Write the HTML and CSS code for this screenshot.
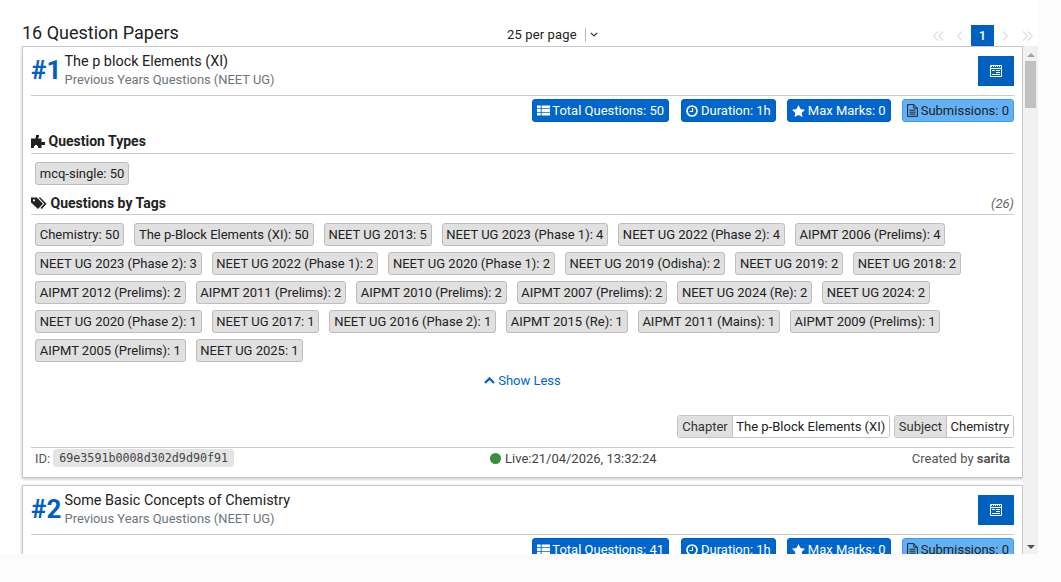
FILE: index.html
```html
<!DOCTYPE html>
<html lang="en">
<head>
<meta charset="utf-8">
<title>Question Papers</title>
<link rel="stylesheet" href="styles.css">
</head>
<body>
<div class="viewport">
  <header class="top">
    <h1 class="count">16 Question Papers</h1>
    <div class="perpage"><span class="perpage-label">25 per page</span><span class="perpage-caret"><svg viewBox="0 0 8 5" width="8" height="5"><path d="M.8.8 4 4 7.2.8" fill="none" stroke="#333" stroke-width="1.2"/></svg></span></div>
    <nav class="pager">
      <span class="pg"><svg viewBox="0 0 11 10" width="11" height="10"><path d="M5 .5.8 5 5 9.500M10 .5 5.800 5 10 9.500" fill="none" stroke="#e2e2e2" stroke-width="1.500"/></svg></span>
      <span class="pg"><svg viewBox="0 0 6 10" width="6" height="10"><path d="M5 .5.800 5 5 9.500" fill="none" stroke="#e2e2e2" stroke-width="1.500"/></svg></span>
      <span class="pg pg-on">1</span>
      <span class="pg"><svg viewBox="0 0 6 10" width="6" height="10"><path d="M1 .5 5.200 5 1 9.500" fill="none" stroke="#e2e2e2" stroke-width="1.500"/></svg></span>
      <span class="pg"><svg viewBox="0 0 11 10" width="11" height="10"><path d="M1 .5 5.200 5 1 9.500M6 .5 10.200 5 6 9.500" fill="none" stroke="#e2e2e2" stroke-width="1.500"/></svg></span>
    </nav>
  </header>
  <div class="pane">
    <main class="content">
      <article class="card">
        <div class="card-head">
          <div class="num">#1</div>
          <div class="titles">
            <div class="title">The p block Elements (XI)</div>
            <div class="sub">Previous Years Questions (NEET UG)</div>
          </div>
          <button class="open"><svg class="ic-open" viewBox="0 0 12 12" width="12" height="12"><path d="M.5.5h11v11H.5z" fill="none" stroke="#fff"/><path d="M1 1h1v1H1zM3 1h1v1H3zM5 1h1v1H5zM7 1h1v1H7zM9 1h1v1H9zM1 3h10v1H1zM2 5h3v1H2zM6 5h4v1H6zM6 7h4v1H6zM2 9h8v1H2z" fill="#fff"/></svg></button>
        </div>
        <div class="stats">
          <span class="stat stat-total"><svg class="ic ic-th" viewBox="0 0 14 11" width="13" height="11"><path d="M0 0h4v3.200H0zM5 0h9v3.200H5zM0 3.900h4v3.200H0zM5 3.900h9v3.200H5zM0 7.800h4V11H0zM5 7.800h9V11H5z" fill="#fff"/></svg>Total Questions: 50</span>
          <span class="stat"><svg class="ic" viewBox="0 0 12 12" width="12" height="12"><circle cx="6" cy="6" r="5" fill="none" stroke="#fff" stroke-width="1.700"/><path d="M6.500 3v3.500H3.500" fill="none" stroke="#fff" stroke-width="1.200"/></svg>Duration: 1h</span>
          <span class="stat"><svg class="ic" viewBox="0 0 13 12" width="13" height="12"><path d="M6.500 0l2 4.100 4.500.6-3.300 3.200.8 4.100-4-2.100-4 2.100.8-4.100L0 4.700l4.500-.6z" fill="#fff"/></svg>Max Marks: 0</span>
          <span class="stat stat-light"><svg class="ic" viewBox="0 0 11 13" width="11" height="13"><path d="M.6.6h6.200l3.600 3.600v8.200H.6zM6.800.6v3.600h3.600M2.500 6.200h6M2.500 8.200h6M2.500 10.200h6" fill="none" stroke="#222" stroke-width="1"/></svg>Submissions: 0</span>
        </div>

        <h2 class="sec"><svg class="ic-sec" viewBox="0 0 14 13" width="14" height="13"><path d="M5 0h3v2.500H7v1h3.500V7H14v3h-3.500v3H7v-2H6v-1H4v1H3v2H0V3.500h4.500v-1H5z" fill="#222"/></svg><span>Question Types</span></h2>
        <div class="tags">
          <span class="tag">mcq-single: 50</span>
        </div>

        <h2 class="sec sec-tags"><svg class="ic-sec" viewBox="0 0 16 13" width="16" height="13"><path d="M0 .5h5.800L12 6.800 7 12 0 5.500z" fill="#222"/><path d="M7.500.5h1.800l6.200 6.300-4.700 5.200-1.300-1 3.800-4.200z" fill="#222"/><circle cx="3" cy="3.300" r="1.100" fill="#fff"/></svg><span>Questions by Tags</span><em class="total">(26)</em></h2>
        <div class="tags">
          <span class="tag">Chemistry: 50</span>
          <span class="tag">The p-Block Elements (XI): 50</span>
          <span class="tag">NEET UG 2013: 5</span>
          <span class="tag">NEET UG 2023 (Phase 1): 4</span>
          <span class="tag">NEET UG 2022 (Phase 2): 4</span>
          <span class="tag">AIPMT 2006 (Prelims): 4</span>
          <span class="tag">NEET UG 2023 (Phase 2): 3</span>
          <span class="tag">NEET UG 2022 (Phase 1): 2</span>
          <span class="tag">NEET UG 2020 (Phase 1): 2</span>
          <span class="tag">NEET UG 2019 (Odisha): 2</span>
          <span class="tag">NEET UG 2019: 2</span>
          <span class="tag">NEET UG 2018: 2</span>
          <span class="tag">AIPMT 2012 (Prelims): 2</span>
          <span class="tag">AIPMT 2011 (Prelims): 2</span>
          <span class="tag">AIPMT 2010 (Prelims): 2</span>
          <span class="tag">AIPMT 2007 (Prelims): 2</span>
          <span class="tag">NEET UG 2024 (Re): 2</span>
          <span class="tag">NEET UG 2024: 2</span>
          <span class="tag">NEET UG 2020 (Phase 2): 1</span>
          <span class="tag">NEET UG 2017: 1</span>
          <span class="tag">NEET UG 2016 (Phase 2): 1</span>
          <span class="tag">AIPMT 2015 (Re): 1</span>
          <span class="tag">AIPMT 2011 (Mains): 1</span>
          <span class="tag">AIPMT 2009 (Prelims): 1</span>
          <span class="tag">AIPMT 2005 (Prelims): 1</span>
          <span class="tag">NEET UG 2025: 1</span>
        </div>
        <a class="less"><svg viewBox="0 0 11 7" width="11" height="7"><path d="M1 6l4.500-4.500L10 6" fill="none" stroke="#0066cc" stroke-width="2.400"/></svg>Show Less</a>

        <div class="meta">
          <span class="pair"><span class="pair-k">Chapter</span><span class="pair-v">The p-Block Elements (XI)</span></span>
          <span class="pair"><span class="pair-k">Subject</span><span class="pair-v">Chemistry</span></span>
        </div>
        <footer class="foot">
          <div class="foot-id">ID: <code class="code">69e3591b0008d302d9d90f91</code></div>
          <div class="foot-live"><span class="dot"></span>Live:21/04/2026, 13:32:24</div>
          <div class="foot-by">Created by <b>sarita</b></div>
        </footer>
      </article>

      <article class="card">
        <div class="card-head">
          <div class="num">#2</div>
          <div class="titles">
            <div class="title">Some Basic Concepts of Chemistry</div>
            <div class="sub">Previous Years Questions (NEET UG)</div>
          </div>
          <button class="open"><svg class="ic-open" viewBox="0 0 12 12" width="12" height="12"><path d="M.5.5h11v11H.5z" fill="none" stroke="#fff"/><path d="M1 1h1v1H1zM3 1h1v1H3zM5 1h1v1H5zM7 1h1v1H7zM9 1h1v1H9zM1 3h10v1H1zM2 5h3v1H2zM6 5h4v1H6zM6 7h4v1H6zM2 9h8v1H2z" fill="#fff"/></svg></button>
        </div>
        <div class="stats">
          <span class="stat stat-total"><svg class="ic ic-th" viewBox="0 0 14 11" width="13" height="11"><path d="M0 0h4v3.200H0zM5 0h9v3.200H5zM0 3.900h4v3.200H0zM5 3.900h9v3.200H5zM0 7.800h4V11H0zM5 7.800h9V11H5z" fill="#fff"/></svg>Total Questions: 41</span>
          <span class="stat"><svg class="ic" viewBox="0 0 12 12" width="12" height="12"><circle cx="6" cy="6" r="5" fill="none" stroke="#fff" stroke-width="1.700"/><path d="M6.500 3v3.500H3.500" fill="none" stroke="#fff" stroke-width="1.200"/></svg>Duration: 1h</span>
          <span class="stat"><svg class="ic" viewBox="0 0 13 12" width="13" height="12"><path d="M6.500 0l2 4.100 4.500.6-3.300 3.200.8 4.100-4-2.100-4 2.100.8-4.100L0 4.700l4.500-.6z" fill="#fff"/></svg>Max Marks: 0</span>
          <span class="stat stat-light"><svg class="ic" viewBox="0 0 11 13" width="11" height="13"><path d="M.6.6h6.200l3.600 3.600v8.200H.6zM6.800.6v3.600h3.600M2.500 6.200h6M2.500 8.200h6M2.500 10.200h6" fill="none" stroke="#222" stroke-width="1"/></svg>Submissions: 0</span>
        </div>
      </article>
    </main>
    <aside class="scrollbar">
      <span class="arrow arrow-up"></span>
      <div class="track"><div class="thumb"></div></div>
      <span class="arrow arrow-down"></span>
    </aside>
  </div>
</div>
</body>
</html>
```
FILE: styles.css
```css
* { box-sizing: border-box; }
html, body { margin: 0; padding: 0; }
body {
  background: #fcfcfc;
  font-family: Roboto, "Liberation Sans", sans-serif;
  font-size: 13px;
  color: #222;
  height: 582px;
  overflow: hidden;
}
.viewport { display: flex; flex-direction: column; width: 1038px; height: 554px; background: #fff; }
.top { display: flex; align-items: flex-end; height: 46px; flex: none; padding-left: 22px; }
.count { margin: 0 0 2px; font-size: 18px; font-weight: 400; line-height: 22px; width: 485px; color: #222; }
.perpage { display: flex; align-items: center; height: 21px; margin-bottom: 1px; }
.perpage-label { padding-right: 8px; letter-spacing: .01em; }
.perpage-caret { border-left: 1px solid #bbb; height: 14px; padding-left: 4px; display: flex; align-items: center; }
.pager { display: flex; margin-left: auto; }
.pg { width: 22px; height: 21px; line-height: 21px; display: flex; align-items: center; justify-content: center; color: #ddd; }
.pg-on { width: 23px; background: #0060c0; color: #fff; font-weight: 500; font-size: 13px; }

.pane { flex: 1; min-height: 0; display: flex; }
.content { flex: 1; min-width: 0; overflow: hidden; padding: 0 0 0 22px; }
.card {
  width: 1001px;
  border: 1px solid #c8c8c8;
  background: #fff;
  padding: 0 8px;
  margin-bottom: 7px;
  box-shadow: 0 1px 3px rgba(0,0,0,.25);
}
.card-head { display: flex; align-items: flex-start; height: 49px; border-bottom: 1px solid #ccc; padding-top: 4px; }
.num { font-size: 26px; font-weight: 700; color: #0060c0; line-height: 38px; width: 33.500px; }
.titles { flex: 1; }
.title { font-size: 14.400px; line-height: 21px; color: #222; }
.sub { font-size: 12.900px; line-height: 16px; color: #6c757d; }
.open {
  width: 36px; height: 30px; margin-top: 5px; border: 0; padding: 0;
  background: #0060c0; display: flex; align-items: center; justify-content: center;
}
.ic-open { display: block; }
.stats { display: flex; justify-content: flex-end; gap: 11px; padding-top: 3px; height: 36px; }
.stat {
  display: inline-flex; align-items: center; gap: 3px; height: 23px; padding: 0 4px;
  background: #0066cc; color: #fff; border: 1px solid #0060c0; border-radius: 3px;
}
.stat-total { margin-right: 1px; }
.stat-light { background: #62b1f6; color: #222; border-color: #3d9bf0; }
.ic { display: block; flex: none; }
.ic-th { margin-right: -1px; }

.sec {
  display: flex; align-items: center; gap: 3.500px; margin: 0; height: 22px; padding-bottom: 3px;
  font-size: 14px; font-weight: 700; line-height: 17px; color: #222; border-bottom: 1px solid #ccc;
}
.ic-sec { display: block; flex: none; }
.sec-tags { margin-top: 8px; padding-bottom: 1px; }
.total { margin-left: auto; font-weight: 400; font-size: 13px; color: #666; }
.tags { display: flex; flex-wrap: wrap; gap: 6px 10px; padding: 8px 4px 0; }
.tag {
  height: 23px; line-height: 21px; padding: 0 3.750px;
  background: #e0e0e0; border: 1px solid #bdbdbd; border-radius: 3px; color: #222;
}
.less {
  display: flex; align-items: center; justify-content: center; gap: 3px;
  margin-top: 10px; height: 17px; color: #0066cc;
}
.meta { display: flex; justify-content: flex-end; gap: 4px; margin-top: 26px; }
.pair { display: inline-flex; height: 23px; line-height: 21px; border: 1px solid #c4c4c4; border-radius: 3px; overflow: hidden; }
.pair-k { background: #e0e0e0; padding: 0 3.750px; border-right: 1px solid #c4c4c4; color: #333; }
.pair-v { background: #fff; padding: 0 3.750px; color: #222; }
.foot {
  display: flex; align-items: center; margin-top: 9px; height: 30px; padding: 0 4px 9px;
  border-top: 1px solid #ccc; font-size: 13px; color: #555;
}
.foot-id { width: 455px; display: flex; align-items: center; gap: 3px; }
.code {
  font-family: "DejaVu Sans Mono", "Liberation Mono", monospace; font-size: 11.700px;
  background: #e4e4e4; border-radius: 4px; padding: 2px 6px; color: #444; line-height: 14px;
}
.foot-live { display: flex; align-items: center; gap: 4px; color: #444; }
.dot { width: 11px; height: 11px; border-radius: 50%; background: #388e3c; }
.foot-by { margin-left: auto; }
.foot-by b { font-weight: 700; }

.scrollbar { width: 15px; background: #f1f1f1; display: flex; flex-direction: column; align-items: center; flex: none; }
.arrow { display: block; width: 0; height: 0; border-left: 4px solid transparent; border-right: 4px solid transparent; flex: none; }
.arrow-up { border-bottom: 4px solid #a3a3a3; margin-top: 7px; margin-bottom: 4px; }
.arrow-down { border-top: 4px solid #505050; margin: 5px 0 5px; }
.track { flex: 1; width: 100%; }
.thumb { height: 47px; background: #c1c1c1; margin: 0 2px; }
```
